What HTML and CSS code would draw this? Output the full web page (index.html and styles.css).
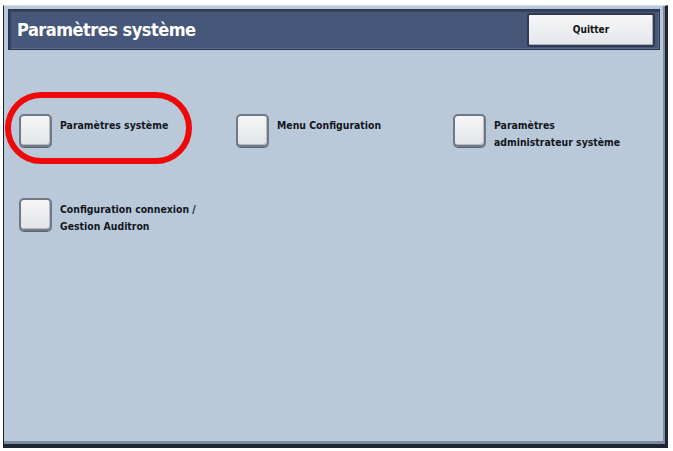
FILE: index.html
```html
<!DOCTYPE html>
<html>
<head>
  <title>Paramètres système</title>
  <link rel="stylesheet" href="styles.css">
</head>
<body>
  <div class="frame">
    <div class="header">
      <h1>Paramètres système</h1>
      <button class="quit">Quitter</button>
    </div>

    <div class="options">
      <div class="option highlighted">
        <span class="box"></span>
        <span class="label">Paramètres système</span>
        <span class="ring"></span>
      </div>
      <div class="option">
        <span class="box"></span>
        <span class="label">Menu Configuration</span>
      </div>
      <div class="option">
        <span class="box"></span>
        <span class="label">Paramètres<br>administrateur système</span>
      </div>
      <div class="option">
        <span class="box"></span>
        <span class="label">Configuration connexion /<br>Gestion Auditron</span>
      </div>
    </div>
  </div>
</body>
</html>
```

FILE: styles.css
```css
body {
  margin: 0;
  padding: 0;
  background: #ffffff;
  font-family: "DejaVu Sans", sans-serif;
}

.frame {
  box-sizing: border-box;
  margin: 5px 0 0 3px;
  width: 665px;
  height: 443px;
  background: #b9c9da;
  border-left: 1px solid #1c2230;
  border-top: 1px solid #d4dde8;
  border-right: 3px solid #1e2533;
  border-bottom: 4px solid #1e2533;
  box-shadow: inset 0 -3px 0 #7d8aa0, inset -2px 0 0 #7d8aa0;
  padding: 3px 4px 0 4px;
}

.header {
  box-sizing: border-box;
  height: 41px;
  margin-right: 1px;
  background: #46577a;
  border: 1px solid #2b3650;
  box-shadow: inset 2px 2px 0 #35425f, inset -1px -1px 0 #5d6c8c;
  display: flex;
  align-items: center;
  justify-content: space-between;
  padding: 0 4px 0 8px;
}

.header h1 {
  margin: 0;
  color: #ffffff;
  font-family: "DejaVu Sans Condensed", "DejaVu Sans", sans-serif;
  font-weight: bold;
  font-size: 18px;
  letter-spacing: -0.5px;
}

.quit {
  box-sizing: border-box;
  width: 128px;
  height: 34px;
  background: linear-gradient(#f7f7f7, #e4e6ea);
  border: 2px solid #2f3a52;
  border-radius: 3px;
  box-shadow: inset -1px -1px 0 #a9b0bd;
  font-family: "DejaVu Sans Condensed", "DejaVu Sans", sans-serif;
  font-weight: bold;
  font-size: 10px;
  color: #111111;
}

.options {
  display: grid;
  grid-template-columns: 217px 217px 217px;
  grid-auto-rows: 84px;
  padding: 64px 0 0 11px;
}

.option {
  position: relative;
  display: flex;
  align-items: flex-start;
}

.box {
  box-sizing: border-box;
  flex: none;
  width: 33px;
  height: 33px;
  border: 2px solid #707886;
  border-radius: 5px;
  background: linear-gradient(#f6f6f6, #e2e4e8);
  box-shadow: 0 1px 0 #5d6472, inset -1px -1px 0 #b8bcc4;
}

.label {
  margin: 3px 0 0 8px;
  font-family: "DejaVu Sans Condensed", "DejaVu Sans", sans-serif;
  font-weight: bold;
  font-size: 10.4px;
  line-height: 17px;
  color: #14161c;
}

.ring {
  position: absolute;
  left: -14px;
  top: -22px;
  width: 187px;
  height: 72px;
  box-sizing: border-box;
  border: 6px solid #ee0a0a;
  border-radius: 36px;
}
```
